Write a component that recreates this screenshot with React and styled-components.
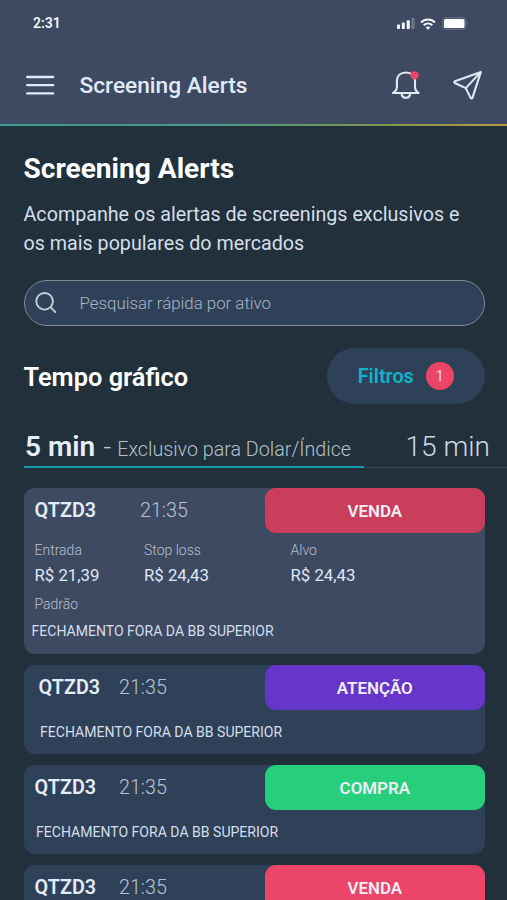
import React from "react";
import styled, { createGlobalStyle } from "styled-components";

const GlobalStyle = createGlobalStyle`
  *, *::before, *::after { box-sizing: border-box; }
  body {
    margin: 0;
    background: #22303c;
    font-family: Roboto, "Liberation Sans", sans-serif;
    color: #e4ecf6;
  }
  h1, h2, p { margin: 0; }
  button { font-family: inherit; border: 0; padding: 0; background: none; color: inherit; }
  svg { display: block; flex: none; }
`;

const Screen = styled.div`
  width: 100%;
  height: 900px;
  overflow: hidden;
  display: flex;
  flex-direction: column;
  background: #22303c;
`;

const Header = styled.header`
  flex: none;
  height: 124px;
  background: #3e4962;
`;

const HeaderEdge = styled.div`
  flex: none;
  height: 2px;
  background: linear-gradient(90deg, #3c9c94 0%, #4d9a83 45%, #80964f 75%, #b79c3e 100%);
`;

const StatusBar = styled.div`
  height: 46px;
  padding: 0 38.5px 0 33px;
  display: flex;
  align-items: center;
  justify-content: space-between;
  font-size: 14px;
  font-weight: 600;
  color: #f2f7fc;
`;

const StatusIcons = styled.div`
  display: flex;
  align-items: center;
  gap: 5.5px;
  padding-top: 1px;
`;

const AppBar = styled.div`
  height: 78px;
  padding: 0 24px 0 26px;
  display: flex;
  align-items: center;
`;

const IconButton = styled.button`
  flex: none;
  display: flex;
  margin-right: ${(p) => p.$gap || 0}px;
`;

const BarTitle = styled.div`
  flex: 1;
  padding-top: 2px;
  font-size: 22.7px;
  line-height: 28px;
  font-weight: 500;
  color: #e0eaf7;
`;

const Content = styled.main`
  padding: 27px 22.5px 0 23.5px;
`;

const PageTitle = styled.h1`
  font-size: 28.1px;
  line-height: 32px;
  font-weight: 700;
  color: #fff;
`;

const Lead = styled.p`
  margin-top: 15px;
  font-size: 19.7px;
  line-height: 29px;
  color: #d5dee9;
  white-space: nowrap;
`;

const SearchBox = styled.div`
  margin-top: 22px;
  height: 46px;
  padding-left: 10px;
  border: 1.5px solid #7f8b95;
  border-radius: 23px;
  background: #2f4158;
  display: flex;
  align-items: center;
  gap: 21px;
`;

const SearchHint = styled.span`
  font-size: 16.85px;
  font-weight: 300;
  color: #a9b5c4;
`;

const SectionBar = styled.div`
  margin-top: 22px;
  display: flex;
  align-items: center;
  justify-content: space-between;
`;

const SectionTitle = styled.h2`
  padding-top: 2px;
  font-size: 25.4px;
  line-height: 30px;
  font-weight: 600;
  color: #fff;
`;

const FilterButton = styled.button`
  width: 157.5px;
  height: 56px;
  border-radius: 28px;
  background: #2f4158;
  display: flex;
  align-items: center;
  justify-content: center;
  gap: 12px;
  font-size: 19.8px;
  font-weight: 600;
  color: #11b4c9;
`;

const Count = styled.span`
  width: 28px;
  height: 28px;
  border-radius: 50%;
  background: #ec4568;
  color: #f9d9e0;
  font-size: 14px;
  font-weight: 400;
  display: flex;
  align-items: center;
  justify-content: center;
`;

const Tabs = styled.div`
  margin: 24px -22.5px 0 0;
  height: 40px;
  display: flex;
  align-items: stretch;
  border-bottom: 1px solid #384653;
  white-space: nowrap;
`;

const Tab = styled.div`
  width: ${(p) => p.$width || "auto"};
  margin-bottom: -1px;
  padding: 0 0 0 ${(p) => p.$inset || 1.5}px;
  display: flex;
  align-items: baseline;
  font-size: 28px;
  line-height: 38px;
  font-weight: ${(p) => (p.$active ? 600 : 300)};
  color: ${(p) => (p.$active ? "#e6eef8" : "#ced8e2")};
  border-bottom: 2px solid ${(p) => (p.$active ? "#1899a8" : "transparent")};
`;

const Dash = styled.span`
  margin: 0 6px 0 8px;
  font-weight: 300;
  color: #b9c5d1;
`;

const TabNote = styled.span`
  font-size: 19.7px;
  font-weight: 300;
  color: #b5c0cc;
`;

const AlertList = styled.div`
  margin-top: 20px;
  display: flex;
  flex-direction: column;
  gap: 11px;
`;

const Card = styled.article`
  height: ${(p) => (p.$open ? 166 : 89)}px;
  border-radius: 11px;
  background: ${(p) => (p.$open ? "#3e4962" : "#2f4158")};
`;

const CardTop = styled.div`
  display: flex;
  align-items: center;
  height: 45px;
`;

const Ticker = styled.span`
  width: ${(p) => p.$width}px;
  margin-left: ${(p) => p.$inset}px;
  font-size: 19.8px;
  font-weight: 600;
  color: #e2ebf7;
`;

const Time = styled.span`
  font-size: 19.7px;
  font-weight: 300;
  color: #b7c4d5;
`;

const kinds = {
  sellMuted: "#cb3e5b",
  attention: "#6536c9",
  buy: "#27ce7c",
  sell: "#eb456a",
};

const Signal = styled.div`
  width: 219.5px;
  height: 45px;
  margin-left: auto;
  border-radius: 11px;
  background: ${(p) => kinds[p.$kind]};
  display: flex;
  align-items: center;
  justify-content: center;
  font-size: 16.9px;
  font-weight: 600;
  color: #f0eff6;
`;

const Prices = styled.dl`
  margin: 7px 0 0 11px;
  display: grid;
  grid-template-columns: 109.5px 146.5px auto;
`;

const Label = styled.dt`
  font-size: 14px;
  line-height: 20px;
  font-weight: 300;
  color: #b6c1d2;
`;

const Value = styled.dd`
  margin: 3px 0 0;
  font-size: 16.8px;
  line-height: 24px;
  color: #dfe8f5;
`;

const PatternLabel = styled.div`
  margin: 7px 0 0 11px;
  font-size: 14px;
  line-height: 20px;
  font-weight: 300;
  color: #b6c1d2;
`;

const Pattern = styled.p`
  margin: ${(p) => p.$top}px 0 0 ${(p) => p.$inset}px;
  font-size: 14.05px;
  line-height: 20px;
  color: #d3deeb;
`;

const MenuIcon = () => (
  <svg width="30" height="20" viewBox="0 0 30 20" stroke="#e0eaf7" strokeWidth="2.3" strokeLinecap="round">
    <path d="M1.2 2h26M1.2 10.200h26M1.200 18.400h26" />
  </svg>
);

const BellIcon = () => (
  <svg width="30" height="30" viewBox="0 0 30 30" fill="none" stroke="#dfeaf5" strokeWidth="2.1" strokeLinecap="round" strokeLinejoin="round">
    <path d="M2 23h25.600c-2.500-1.500-3.600-3.500-3.600-6.500v-5.300c0-5.500-3.600-8.700-9-8.700s-9.100 3.200-9.100 8.700v5.300c0 3-1.200 5-3.900 6.500Z" />
    <path d="M10.500 23.500c.4 2.900 2 4.300 4.400 4.300s4-1.400 4.400-4.300" />
    <circle cx="23.500" cy="5.300" r="4.100" fill="#ec4568" stroke="none" />
  </svg>
);

const SendIcon = () => (
  <svg width="30" height="30" viewBox="0 0 30 30" fill="none" stroke="#dfeaf5" strokeWidth="2.1" strokeLinejoin="round" strokeLinecap="round">
    <path d="M27.900 1.900 1.900 11.200a1 1 0 0 0-.1 1.800l11 5.100 4.800 9.800a1 1 0 0 0 1.900-.2ZM12.800 18.100 27.900 1.900" />
  </svg>
);

const SearchIcon = () => (
  <svg width="24" height="24" viewBox="0 0 24 24" fill="none" stroke="#c3ccd4" strokeWidth="1.900" strokeLinecap="round">
    <circle cx="9.600" cy="10.300" r="8.300" />
    <path d="m15.700 16.400 4.600 4.600" />
  </svg>
);

const SignalBars = () => (
  <svg width="18" height="11" viewBox="0 0 18 11" fill="#f4f8fc">
    <rect x="0" y="6.500" width="3" height="4.500" rx=".8" />
    <rect x="4.800" y="4.600" width="3" height="6.400" rx=".8" />
    <rect x="9.700" y="2.300" width="3.100" height="8.700" rx=".8" />
    <rect x="14.500" y="0" width="3" height="11" rx=".8" opacity=".28" />
  </svg>
);

const WifiIcon = () => (
  <svg width="16" height="12" viewBox="0 0 16 12" fill="none" stroke="#f4f8fc" strokeWidth="1.900">
    <path d="M1 4.500c4-4 10-4 14 0M3.700 7.300c2.500-2.400 6.100-2.400 8.600 0" />
    <path d="M5.700 9.400c1.300-1.300 3.300-1.300 4.600 0L8 11.800Z" fill="#f4f8fc" stroke="none" />
  </svg>
);

const BatteryIcon = () => (
  <svg width="27" height="13" viewBox="0 0 27 13">
    <rect x=".5" y=".5" width="23.500" height="12" rx="3" fill="#4c566e" stroke="#5f6980" />
    <rect x="2" y="2" width="20.500" height="9" rx="1.500" fill="#fff" />
    <path d="M25.200 4.500q1.600 2 0 4Z" fill="#5f6980" />
  </svg>
);

const alerts = [
  { ticker: "QTZD3", time: "21:35", action: "ATENÇÃO", kind: "attention", inset: 15, textInset: 16.5 },
  { ticker: "QTZD3", time: "21:35", action: "COMPRA", kind: "buy", inset: 11, textInset: 12.5 },
  { ticker: "QTZD3", time: "21:35", action: "VENDA", kind: "sell", inset: 11, textInset: 12.5 },
];

const prices = [
  ["Entrada", "R$ 21,39"],
  ["Stop loss", "R$ 24,43"],
  ["Alvo", "R$ 24,43"],
];

export default function App() {
  return (
    <>
      <GlobalStyle />
      <Screen>
        <Header>
          <StatusBar>
            <span>2:31</span>
            <StatusIcons>
              <SignalBars />
              <WifiIcon />
              <BatteryIcon />
            </StatusIcons>
          </StatusBar>
          <AppBar>
            <IconButton aria-label="Menu" $gap={23.5}><MenuIcon /></IconButton>
            <BarTitle>Screening Alerts</BarTitle>
            <IconButton aria-label="Notificações" $gap={32}><BellIcon /></IconButton>
            <IconButton aria-label="Enviar"><SendIcon /></IconButton>
          </AppBar>
        </Header>
        <HeaderEdge />
        <Content>
          <PageTitle>Screening Alerts</PageTitle>
          <Lead>
            Acompanhe os alertas de screenings exclusivos e<br />
            os mais populares do mercados
          </Lead>
          <SearchBox>
            <SearchIcon />
            <SearchHint>Pesquisar rápida por ativo</SearchHint>
          </SearchBox>
          <SectionBar>
            <SectionTitle>Tempo gráfico</SectionTitle>
            <FilterButton>Filtros<Count>1</Count></FilterButton>
          </SectionBar>
          <Tabs>
            <Tab $active $width="340px">
              5 min<Dash>-</Dash><TabNote>Exclusivo para Dolar/Índice</TabNote>
            </Tab>
            <Tab $inset={42}>15 min</Tab>
          </Tabs>
          <AlertList>
            <Card $open>
              <CardTop>
                <Ticker $inset={11} $width={105.5}>QTZD3</Ticker>
                <Time>21:35</Time>
                <Signal $kind="sellMuted">VENDA</Signal>
              </CardTop>
              <Prices>
                {prices.map(([label, value]) => (
                  <div key={label}>
                    <Label>{label}</Label>
                    <Value>{value}</Value>
                  </div>
                ))}
              </Prices>
              <PatternLabel>Padrão</PatternLabel>
              <Pattern $top={7} $inset={8}>FECHAMENTO FORA DA BB SUPERIOR</Pattern>
            </Card>
            {alerts.map((a) => (
              <Card key={a.kind}>
                <CardTop>
                  <Ticker $inset={a.inset} $width={95.5 - a.inset}>{a.ticker}</Ticker>
                  <Time>{a.time}</Time>
                  <Signal $kind={a.kind}>{a.action}</Signal>
                </CardTop>
                <Pattern $top={12} $inset={a.textInset}>FECHAMENTO FORA DA BB SUPERIOR</Pattern>
              </Card>
            ))}
          </AlertList>
        </Content>
      </Screen>
    </>
  );
}
